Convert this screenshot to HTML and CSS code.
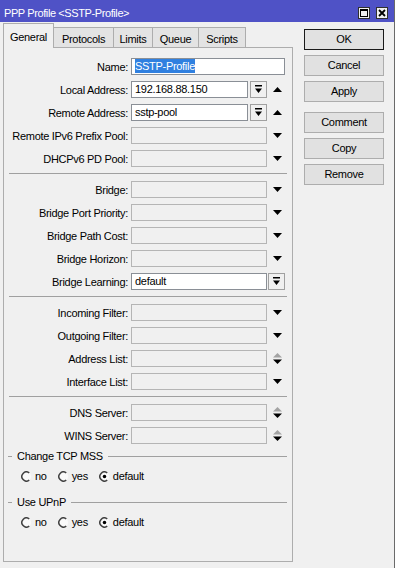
FILE: index.html
```html
<!DOCTYPE html>
<html lang="en">
<head>
	<meta charset="UTF-8">
	<title>PPP Profile</title>
	<link rel="stylesheet" href="styles.css">
</head>
<body>
	<div class="window">
		<div class="titlebar">
			<span>PPP Profile &lt;SSTP-Profile&gt;</span>
			<div class="wbtns">
				<span class="wbtn"><svg width="8" height="8" viewBox="0 0 8 8"><rect x="0.5" y="0.5" width="7" height="7" fill="none" stroke="#000"/><path d="M0 1.5h8" stroke="#000"/></svg></span>
				<span class="wbtn"><svg width="8" height="8" viewBox="0 0 8 8"><path d="M1 1l6 6M7 1L1 7" stroke="#000" stroke-width="1.8"/></svg></span>
			</div>
		</div>

		<div class="body">
			<div class="main">
				<div class="tabs">
					<div class="tab cur" style="width:51px">General</div>
					<div class="tab" style="width:61px">Protocols</div>
					<div class="tab" style="width:40px">Limits</div>
					<div class="tab" style="width:47px">Queue</div>
					<div class="tab" style="width:48px">Scripts</div>
				</div>

				<div class="panel">
					<div class="row">
						<label class="lbl">Name:</label>
						<div class="inp w-full"><span class="sel">SSTP-Profile</span></div>
					</div>
					<div class="row">
						<label class="lbl">Local Address:</label>
						<div class="inp w-short">192.168.88.150</div>
						<span class="drop"><svg width="7" height="9" viewBox="0 0 7 9"><path d="M0 0h7v1.5H0zM0 3.5h7L3.5 8z"/></svg></span>
						<span class="arr"><svg width="9" height="5" viewBox="0 0 9 5"><path d="M0 5h9L4.5 0z"/></svg></span>
					</div>
					<div class="row">
						<label class="lbl">Remote Address:</label>
						<div class="inp w-short">sstp-pool</div>
						<span class="drop"><svg width="7" height="9" viewBox="0 0 7 9"><path d="M0 0h7v1.5H0zM0 3.5h7L3.5 8z"/></svg></span>
						<span class="arr"><svg width="9" height="5" viewBox="0 0 9 5"><path d="M0 5h9L4.5 0z"/></svg></span>
					</div>
					<div class="row">
						<label class="lbl">Remote IPv6 Prefix Pool:</label>
						<div class="inp off w-mid"></div>
						<span class="arr"><svg width="9" height="5" viewBox="0 0 9 5"><path d="M0 0h9L4.5 5z"/></svg></span>
					</div>
					<div class="row">
						<label class="lbl">DHCPv6 PD Pool:</label>
						<div class="inp off w-mid"></div>
						<span class="arr"><svg width="9" height="5" viewBox="0 0 9 5"><path d="M0 0h9L4.5 5z"/></svg></span>
					</div>

					<div class="sep"></div>

					<div class="row">
						<label class="lbl">Bridge:</label>
						<div class="inp off w-mid"></div>
						<span class="arr"><svg width="9" height="5" viewBox="0 0 9 5"><path d="M0 0h9L4.5 5z"/></svg></span>
					</div>
					<div class="row">
						<label class="lbl">Bridge Port Priority:</label>
						<div class="inp off w-mid"></div>
						<span class="arr"><svg width="9" height="5" viewBox="0 0 9 5"><path d="M0 0h9L4.5 5z"/></svg></span>
					</div>
					<div class="row">
						<label class="lbl">Bridge Path Cost:</label>
						<div class="inp off w-mid"></div>
						<span class="arr"><svg width="9" height="5" viewBox="0 0 9 5"><path d="M0 0h9L4.5 5z"/></svg></span>
					</div>
					<div class="row">
						<label class="lbl">Bridge Horizon:</label>
						<div class="inp off w-mid"></div>
						<span class="arr"><svg width="9" height="5" viewBox="0 0 9 5"><path d="M0 0h9L4.5 5z"/></svg></span>
					</div>
					<div class="row">
						<label class="lbl">Bridge Learning:</label>
						<div class="inp w-mid">default</div>
						<span class="drop tight"><svg width="7" height="9" viewBox="0 0 7 9"><path d="M0 0h7v1.5H0zM0 3.5h7L3.5 8z"/></svg></span>
					</div>

					<div class="sep"></div>

					<div class="row">
						<label class="lbl">Incoming Filter:</label>
						<div class="inp off w-mid"></div>
						<span class="arr"><svg width="9" height="5" viewBox="0 0 9 5"><path d="M0 0h9L4.5 5z"/></svg></span>
					</div>
					<div class="row">
						<label class="lbl">Outgoing Filter:</label>
						<div class="inp off w-mid"></div>
						<span class="arr"><svg width="9" height="5" viewBox="0 0 9 5"><path d="M0 0h9L4.5 5z"/></svg></span>
					</div>
					<div class="row">
						<label class="lbl">Address List:</label>
						<div class="inp off w-mid"></div>
						<span class="arr"><svg width="9" height="11" viewBox="0 0 9 11"><path d="M0 4.5h9L4.5 0z" fill="#a3a3a3"/><path d="M0 6.5h9L4.5 11z"/></svg></span>
					</div>
					<div class="row">
						<label class="lbl">Interface List:</label>
						<div class="inp off w-mid"></div>
						<span class="arr"><svg width="9" height="5" viewBox="0 0 9 5"><path d="M0 0h9L4.5 5z"/></svg></span>
					</div>

					<div class="sep"></div>

					<div class="row">
						<label class="lbl">DNS Server:</label>
						<div class="inp off w-mid"></div>
						<span class="arr"><svg width="9" height="11" viewBox="0 0 9 11"><path d="M0 4.5h9L4.5 0z" fill="#a3a3a3"/><path d="M0 6.5h9L4.5 11z"/></svg></span>
					</div>
					<div class="row">
						<label class="lbl">WINS Server:</label>
						<div class="inp off w-mid"></div>
						<span class="arr"><svg width="9" height="11" viewBox="0 0 9 11"><path d="M0 4.5h9L4.5 0z" fill="#a3a3a3"/><path d="M0 6.5h9L4.5 11z"/></svg></span>
					</div>

					<div class="group">
						<div class="legend">Change TCP MSS</div>
						<div class="radios">
							<span class="radio"><svg width="11" height="11" viewBox="0 0 12 12"><circle cx="6" cy="6" r="5" fill="#fafafa"/><path d="M9 2A5 5 0 1 0 9 10" fill="none" stroke="#404040" stroke-width="1.6"/></svg>no</span>
							<span class="radio"><svg width="11" height="11" viewBox="0 0 12 12"><circle cx="6" cy="6" r="5" fill="#fafafa"/><path d="M9 2A5 5 0 1 0 9 10" fill="none" stroke="#404040" stroke-width="1.6"/></svg>yes</span>
							<span class="radio"><svg width="11" height="11" viewBox="0 0 12 12"><circle cx="6" cy="6" r="5" fill="#fafafa"/><path d="M9 2A5 5 0 1 0 9 10" fill="none" stroke="#404040" stroke-width="1.6"/><circle cx="6" cy="6" r="1.9"/></svg>default</span>
						</div>
					</div>
					<div class="group">
						<div class="legend">Use UPnP</div>
						<div class="radios">
							<span class="radio"><svg width="11" height="11" viewBox="0 0 12 12"><circle cx="6" cy="6" r="5" fill="#fafafa"/><path d="M9 2A5 5 0 1 0 9 10" fill="none" stroke="#404040" stroke-width="1.6"/></svg>no</span>
							<span class="radio"><svg width="11" height="11" viewBox="0 0 12 12"><circle cx="6" cy="6" r="5" fill="#fafafa"/><path d="M9 2A5 5 0 1 0 9 10" fill="none" stroke="#404040" stroke-width="1.6"/></svg>yes</span>
							<span class="radio"><svg width="11" height="11" viewBox="0 0 12 12"><circle cx="6" cy="6" r="5" fill="#fafafa"/><path d="M9 2A5 5 0 1 0 9 10" fill="none" stroke="#404040" stroke-width="1.6"/><circle cx="6" cy="6" r="1.9"/></svg>default</span>
						</div>
					</div>
				</div>
			</div>

			<div class="side">
				<div class="btn ok">OK</div>
				<div class="btn">Cancel</div>
				<div class="btn">Apply</div>
				<div class="btn more">Comment</div>
				<div class="btn">Copy</div>
				<div class="btn">Remove</div>
			</div>
		</div>
	</div>
</body>
</html>
```

FILE: styles.css
```css
*{
	padding: 0;
	margin: 0;
	box-sizing: border-box;
}
body {
	background: #f0f0f0;
	font-family: "Liberation Sans", Arial, sans-serif;
	font-size: 11px;
	letter-spacing: -0.3px;
	color: #000;
}
.window {
	width: 395px;
	height: 568px;
	background: #f0f0f0;
	border-right: 1px solid #6a6a6a;
}

/* title bar */
.titlebar {
	height: 22px;
	background: #4f52c6;
	color: #fff;
	display: flex;
	align-items: center;
	justify-content: space-between;
	padding: 3px 6px 0 4px;
	letter-spacing: -0.4px;
}
.wbtns {
	display: flex;
	gap: 6px;
}
.wbtn {
	width: 12px;
	height: 12px;
	background: #f0f0f0;
	border: 1px solid #303030;
	display: flex;
	align-items: center;
	justify-content: center;
}

.body {
	display: flex;
	padding: 1px 0 0 3px;
}
.main {
	width: 290px;
}

/* tabs */
.tabs {
	display: flex;
	align-items: flex-end;
	height: 24px;
}
.tab {
	height: 20px;
	border: 1px solid #adadad;
	border-bottom: none;
	background: #e3e3e3;
	text-align: center;
	padding-top: 4px;
	line-height: 14px;
	margin-left: -1px;
}
.tab.cur {
	height: 25px;
	margin-left: 0;
	margin-bottom: -1px;
	padding-top: 6px;
	background: #f0f0f0;
	position: relative;
	z-index: 2;
}

.panel {
	height: 515px;
	border: 1px solid #adadad;
	padding-top: 7px;
}
.row {
	display: flex;
	align-items: center;
	height: 23px;
}
.lbl {
	width: 124px;
	margin-right: 3px;
	text-align: right;
	white-space: nowrap;
}
.inp {
	height: 17px;
	border: 1px solid #8a8f96;
	background: #fff;
	padding-left: 3px;
	line-height: 15px;
	white-space: nowrap;
	overflow: hidden;
}
.inp.off {
	background: #f0f0f0;
	border-color: #b5b5b5;
}
.w-full {
	width: 154px;
}
.w-short {
	width: 117px;
}
.w-mid {
	width: 136px;
}
.sel {
	background: #3080e0;
	color: #fff;
	padding: 1px 0;
}
.drop {
	width: 17px;
	height: 17px;
	margin-left: 2px;
	border: 1px solid #a0a0a0;
	background: #f0f0f0;
	display: flex;
	align-items: center;
	justify-content: center;
}
.drop.tight {
	margin-left: 1px;
}
.arr {
	width: 20px;
	display: flex;
	justify-content: center;
	align-items: center;
}

.sep {
	height: 1px;
	background: #a0a0a0;
	margin: 3px 5px 4px 5px;
}

/* radio groups */
.group + .group {
	margin-top: 6px;
}
.legend {
	display: flex;
	align-items: center;
	height: 18px;
	padding: 0 5px 0 4px;
}
.legend::before {
	content: "";
	width: 4px;
	height: 1px;
	background: #a0a0a0;
	margin-right: 5px;
}
.legend::after {
	content: "";
	flex: 1;
	height: 1px;
	background: #a0a0a0;
	margin-left: 5px;
}
.radios {
	display: flex;
	align-items: center;
	height: 22px;
	padding-left: 17px;
	gap: 11px;
}
.radio {
	display: flex;
	align-items: center;
	gap: 3px;
}

/* side buttons */
.side {
	width: 80px;
	margin-left: 11px;
	padding-top: 6px;
	display: flex;
	flex-direction: column;
	gap: 5px;
}
.btn {
	height: 21px;
	border: 1px solid #adadad;
	background: #e1e1e1;
	text-align: center;
	line-height: 19px;
}
.btn.ok {
	border-color: #1a1a1a;
}
.btn.more {
	margin-top: 5px;
}
```
